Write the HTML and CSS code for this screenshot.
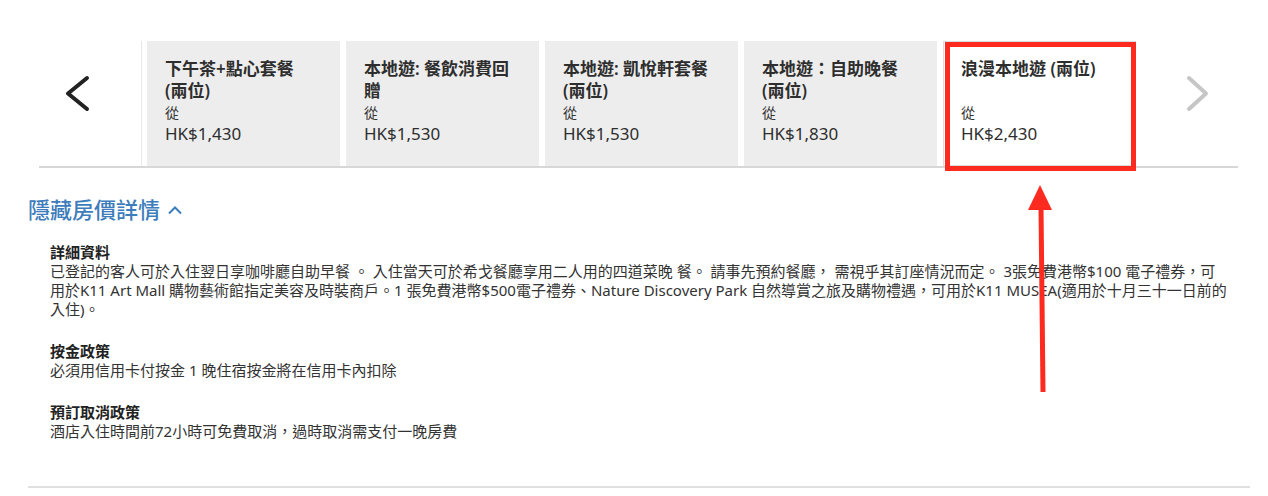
FILE: index.html
```html
<!DOCTYPE html>
<html lang="zh-Hant">
<head>
<meta charset="utf-8">
<title>房價詳情</title>
<link rel="stylesheet" href="styles.css">
</head>
<body>
<div class="page">
  <div class="carousel">
    <div class="nav nav-prev">
      <svg class="chev" width="28" height="40" viewBox="0 0 28 40"><polyline points="23,4 4,19.5 23,35" fill="none" stroke="#222" stroke-width="4" stroke-linecap="round" stroke-linejoin="round"/></svg>
    </div>
    <div class="cards">
      <div class="card">
        <div class="card-title">下午茶+點心套餐 (兩位)</div>
        <div class="card-from">從</div>
        <div class="card-price">HK$1,430</div>
      </div>
      <div class="card">
        <div class="card-title">本地遊: 餐飲消費回贈</div>
        <div class="card-from">從</div>
        <div class="card-price">HK$1,530</div>
      </div>
      <div class="card">
        <div class="card-title">本地遊: 凱悅軒套餐 (兩位)</div>
        <div class="card-from">從</div>
        <div class="card-price">HK$1,530</div>
      </div>
      <div class="card">
        <div class="card-title">本地遊：自助晚餐 (兩位)</div>
        <div class="card-from">從</div>
        <div class="card-price">HK$1,830</div>
      </div>
      <div class="card card-active">
        <div class="card-title">浪漫本地遊 (兩位)</div>
        <div class="card-from">從</div>
        <div class="card-price">HK$2,430</div>
      </div>
    </div>
    <div class="nav nav-next">
      <svg class="chev" width="28" height="40" viewBox="0 0 28 40"><polyline points="6,4 23,19.5 6,35" fill="none" stroke="#c6c6c6" stroke-width="4" stroke-linecap="round" stroke-linejoin="round"/></svg>
    </div>
  </div>

  <div class="toggle">隱藏房價詳情
    <svg class="toggle-icon" width="16" height="10" viewBox="0 0 16 10"><polyline points="2,8.5 8,2.5 14,8.5" fill="none" stroke="#3d7dbb" stroke-width="2"/></svg>
  </div>

  <div class="details">
    <div class="block">
      <div class="block-title">詳細資料</div>
      <p class="block-text">已登記的客人可於入住翌日享咖啡廳自助早餐 。 入住當天可於希戈餐廳享用二人用的四道菜晚 餐。 請事先預約餐廳， 需視乎其訂座情況而定。 3張免費港幣$100 電子禮券，可用於K11 Art Mall 購物藝術館指定美容及時裝商戶。1 張免費港幣$500電子禮券、Nature Discovery Park 自然導賞之旅及購物禮遇，可用於K11 MUSEA(適用於十月三十一日前的入住)。</p>
    </div>
    <div class="block">
      <div class="block-title">按金政策</div>
      <p class="block-text">必須用信用卡付按金 1 晚住宿按金將在信用卡內扣除</p>
    </div>
    <div class="block">
      <div class="block-title">預訂取消政策</div>
      <p class="block-text">酒店入住時間前72小時可免費取消，過時取消需支付一晚房費</p>
    </div>
  </div>
  <div class="rule"></div>

  <div class="highlight"></div>
  <svg class="pointer" width="40" height="220" viewBox="0 0 40 220">
    <line x1="21" y1="22" x2="23" y2="207" stroke="#fd2a1f" stroke-width="5"/>
    <polygon points="20,0 8,25 32,25" fill="#fd2a1f"/>
  </svg>
</div>
</body>
</html>
```

FILE: styles.css
```css
* { box-sizing: border-box; }
html, body { margin: 0; padding: 0; background: #fff; }
body {
  font-family: "Noto Sans", "Noto Sans CJK TC", sans-serif;
  color: #333;
}
.page {
  position: relative;
  width: 1268px;
  height: 496px;
  overflow: hidden;
  padding-top: 41px;
}
.carousel {
  display: flex;
  margin-left: 39px;
  width: 1199px;
  border-bottom: 2px solid #d7d7d7;
}
.nav {
  position: relative;
  height: 125px;
}
.nav-prev {
  width: 103px;
  border-right: 1px solid #e8e8e8;
  margin-right: 5px;
  padding: 33px 0 0 25px;
}
.nav-next {
  flex: 1;
  padding: 33px 0 0 47px;
}
.chev { display: block; }
.cards {
  display: flex;
  gap: 6px;
}
.card {
  width: 193px;
  height: 125px;
  background: #ededed;
  padding: 17px 22px 0 18px;
  display: flex;
  flex-direction: column;
}
.card-active {
  background: #fff;
  box-shadow: inset 0 0 0 1px #dcdcdc;
}
.card-title {
  font-size: 17px;
  line-height: 22px;
  font-weight: 600;
  min-height: 44px;
  color: #2e2e2e;
}
.card-from {
  font-size: 14px;
  line-height: 20px;
  margin-top: 1px;
}
.card-price {
  font-size: 17px;
  line-height: 22px;
  color: #2e2e2e;
}
.toggle {
  margin: 26px 0 0 28px;
  font-size: 22px;
  line-height: 30px;
  font-weight: 500;
  color: #3d7dbb;
  display: flex;
  align-items: center;
}
.toggle-icon { margin-left: 7px; margin-top: 2px; }
.details {
  margin: 19px 0 0 50px;
  width: 1180px;
  font-size: 15px;
  line-height: 19px;
}
.block + .block { margin-top: 23px; }
.block-title { font-weight: 700; color: #222; }
.block-text { margin: 0; color: #333; }
.rule {
  position: absolute;
  left: 28px;
  top: 486px;
  width: 1222px;
  height: 2px;
  background: #e0e0e0;
}
.highlight {
  position: absolute;
  left: 945px;
  top: 42px;
  width: 191px;
  height: 129px;
  border: 5px solid #fd2a1f;
}
.pointer {
  position: absolute;
  left: 1020px;
  top: 185px;
}
```
